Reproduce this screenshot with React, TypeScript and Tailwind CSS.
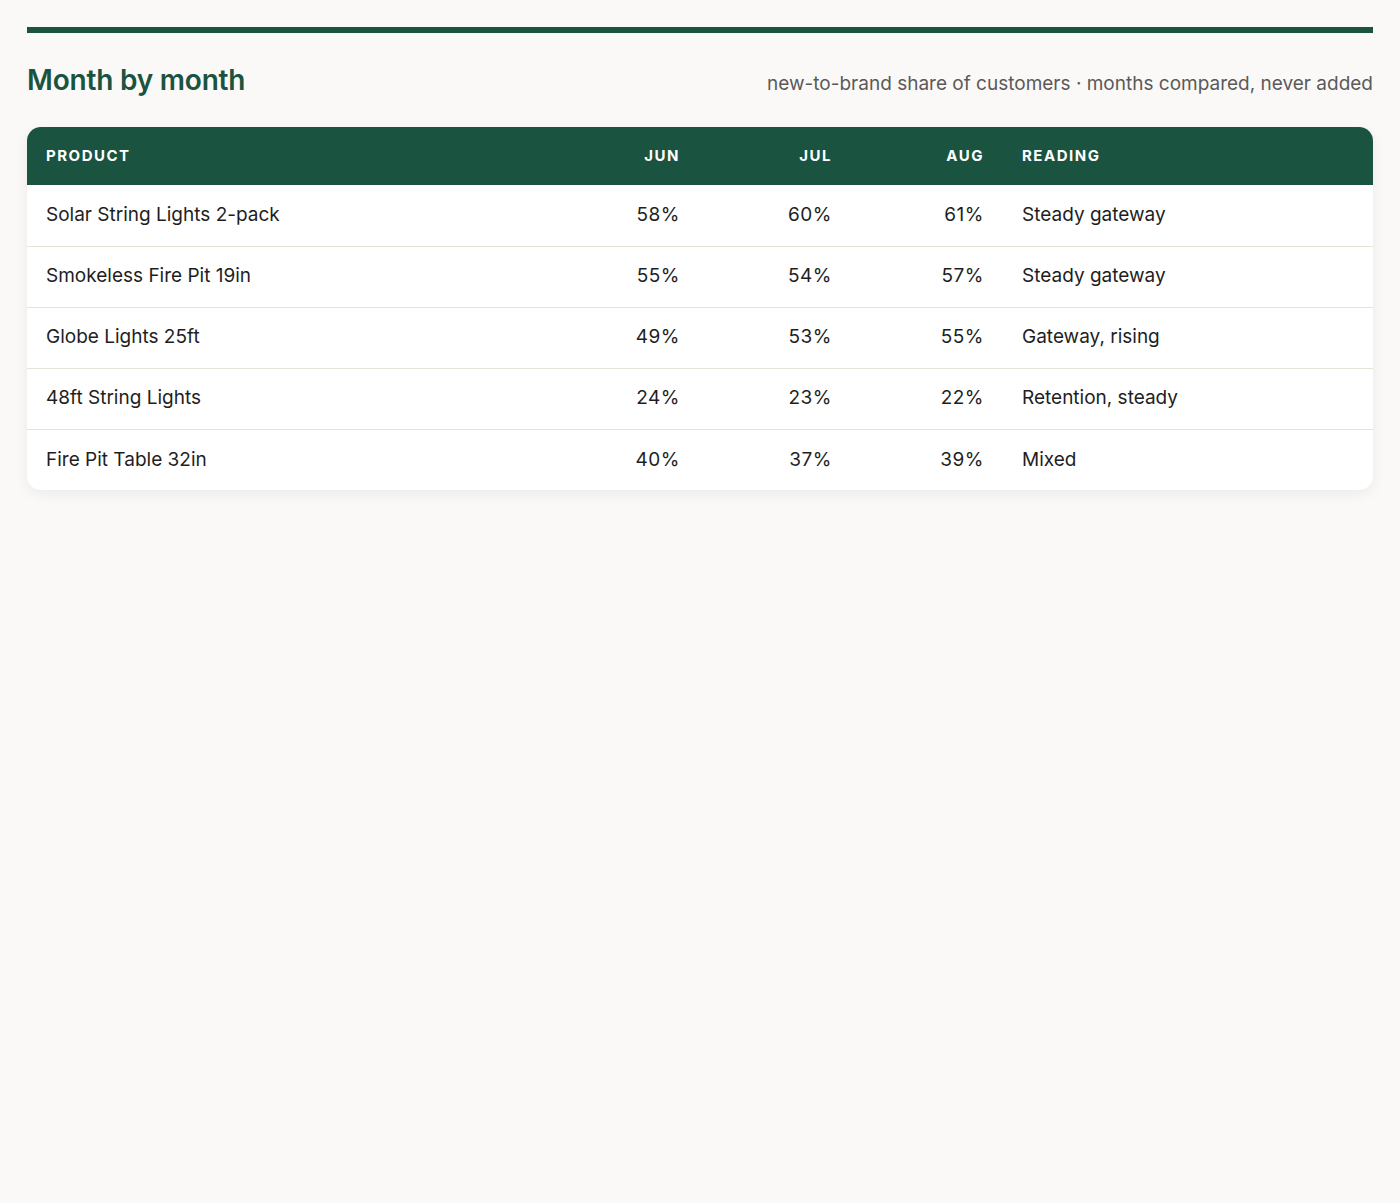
import React from "react";

const rows = [
  ["Solar String Lights 2-pack", "58%", "60%", "61%", "Steady gateway"],
  ["Smokeless Fire Pit 19in", "55%", "54%", "57%", "Steady gateway"],
  ["Globe Lights 25ft", "49%", "53%", "55%", "Gateway, rising"],
  ["48ft String Lights", "24%", "23%", "22%", "Retention, steady"],
  ["Fire Pit Table 32in", "40%", "37%", "39%", "Mixed"],
];

export default function App() {
  return (
    <div className="min-h-[1203px] bg-[#faf9f7] px-[27px] pt-[27px]" style={{ fontFamily: "Inter, 'Noto Sans', sans-serif" }}>
      <div className="h-[6px] bg-[#1a5441]" />
      <div className="flex items-baseline justify-between mt-[26px]">
        <h1 className="text-[28px] font-semibold text-[#1a5441] tracking-[-0.2px]">Month by month</h1>
        <div className="text-[19px] text-[#5a5a5a]">new-to-brand share of customers · months compared, never added</div>
      </div>
      <div className="mt-[26px] rounded-[14px] bg-white overflow-hidden shadow-[0_4px_14px_rgba(0,0,0,0.06)]">
        <table className="w-full border-collapse text-[19px] text-[#1e1e1e]">
          <colgroup>
            <col className="w-[520px]" />
            <col className="w-[152px]" />
            <col className="w-[152px]" />
            <col className="w-[152px]" />
            <col />
          </colgroup>
          <thead>
            <tr className="bg-[#1a5441] text-white text-[15px] font-bold tracking-[1.5px] h-[58px]">
              <th className="text-left px-[19px]">PRODUCT</th>
              <th className="text-right px-[19px]">JUN</th>
              <th className="text-right px-[19px]">JUL</th>
              <th className="text-right px-[19px]">AUG</th>
              <th className="text-left px-[19px]">READING</th>
            </tr>
          </thead>
          <tbody>
            {rows.map((r, i) => (
              <tr key={i} className={`h-[61px] ${i < rows.length - 1 ? "border-b border-[#e6e3da]" : ""}`}>
                <td className="px-[19px]">{r[0]}</td>
                <td className="px-[19px] text-right tracking-[0.5px]">{r[1]}</td>
                <td className="px-[19px] text-right tracking-[0.5px]">{r[2]}</td>
                <td className="px-[19px] text-right tracking-[0.5px]">{r[3]}</td>
                <td className="px-[19px]">{r[4]}</td>
              </tr>
            ))}
          </tbody>
        </table>
      </div>
    </div>
  );
}
